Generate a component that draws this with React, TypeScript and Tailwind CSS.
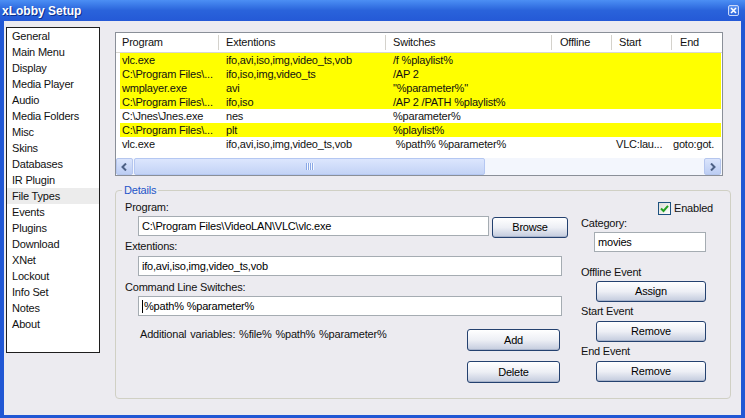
import React from 'react';

const menuItems = [
  'General', 'Main Menu', 'Display', 'Media Player', 'Audio', 'Media Folders', 'Misc', 'Skins',
  'Databases', 'IR Plugin', 'File Types', 'Events', 'Plugins', 'Download', 'XNet', 'Lockout',
  'Info Set', 'Notes', 'About',
];

interface FileType {
  program: string;
  extentions: string;
  switches: string;
  start?: string;
  end?: string;
  highlight: boolean;
}

const fileTypes: FileType[] = [
  { program: 'vlc.exe', extentions: 'ifo,avi,iso,img,video_ts,vob', switches: '/f %playlist%', highlight: true },
  { program: 'C:\\Program Files\\...', extentions: 'ifo,iso,img,video_ts', switches: '/AP 2', highlight: true },
  { program: 'wmplayer.exe', extentions: 'avi', switches: '"%parameter%"', highlight: true },
  { program: 'C:\\Program Files\\...', extentions: 'ifo,iso', switches: '/AP 2 /PATH %playlist%', highlight: true },
  { program: 'C:\\Jnes\\Jnes.exe', extentions: 'nes', switches: '%parameter%', highlight: false },
  { program: 'C:\\Program Files\\...', extentions: 'plt', switches: '%playlist%', highlight: true },
  { program: 'vlc.exe', extentions: 'ifo,avi,iso,img,video_ts,vob', switches: '\u00a0%path% %parameter%', start: 'VLC:lau...', end: 'goto:got.', highlight: false },
];

const columns = [
  { label: 'Program', w: 'w-[103px]', pl: 'pl-[6px]' },
  { label: 'Extentions', w: 'w-[167px]', pl: 'pl-[7px]' },
  { label: 'Switches', w: 'w-[166px]', pl: 'pl-[7px]' },
  { label: 'Offline', w: 'w-[60px]', pl: 'pl-[8px]' },
  { label: 'Start', w: 'w-[60px]', pl: 'pl-[7px]' },
];

const XpButton = ({ label, className }: { label: string; className: string }) => (
  <button
    className={`${className} flex items-center justify-center rounded-[3px] border border-[#24416f] bg-linear-to-b from-white via-[#edeff5] to-[#c3cbdd] text-[11px] leading-none text-black shadow-[inset_0_-1px_0_#a9b4cb]`}
  >
    {label}
  </button>
);

const TextBox = ({ value, className, caret }: { value: string; className: string; caret?: boolean }) => (
  <div className={`${className} flex h-[20px] items-center border border-[#a5acb2] bg-white pl-[3px] text-[11px] text-black whitespace-nowrap overflow-hidden`}>
    {caret && <span className="mr-[1px] inline-block h-[13px] w-px bg-black" />}
    {value}
  </div>
);

const ScrollArrow = ({ dir }: { dir: 'left' | 'right' }) => (
  <div className="flex h-[17px] w-[17px] items-center justify-center rounded-[2px] border border-[#b5c6ee] bg-linear-to-b from-[#dbe5fc] to-[#bccdf3]">
    <svg width="7" height="8" viewBox="0 0 7 8">
      {dir === 'left' ? (
        <path d="M5 0.5 L1.5 4 L5 7.5" fill="none" stroke="#4d6185" strokeWidth="2" />
      ) : (
        <path d="M2 0.5 L5.5 4 L2 7.5" fill="none" stroke="#4d6185" strokeWidth="2" />
      )}
    </svg>
  </div>
);

export default function App() {
  return (
    <div className="flex h-[418px] w-[745px] flex-col bg-[#2157d4] font-['Liberation_Sans',Arial,sans-serif] text-[11px] tracking-[-0.2px] text-[#111]">
      {/* title bar */}
      <div className="flex h-[21px] items-center bg-linear-to-b from-[#4c8ff4] via-[#2a63db] to-[#2459d6] pl-[2px] pr-[6px]">
        <span className="text-[12px] font-bold tracking-normal text-white [text-shadow:1px_1px_0_#0d2f8a]">xLobby Setup</span>
        <div className="ml-auto flex h-[11px] w-[11px] items-center justify-center rounded-[2px] border border-[#c9d8fa] bg-linear-to-b from-[#5f95f2] to-[#2f67dc]">
          <svg width="7" height="7" viewBox="0 0 7 7">
            <path d="M1 1 L6 6 M6 1 L1 6" stroke="white" strokeWidth="1.6" />
          </svg>
        </div>
      </div>

      {/* body */}
      <div className="mb-[3px] ml-[4px] mr-[4px] flex flex-1 bg-[#ecebf0]">
        {/* nav list */}
        <div className="ml-[2px] mt-[6px] h-[326px] w-[94px] border border-[#1e1e1e] bg-white">
          {menuItems.map(item => (
            <div
              key={item}
              className={`h-[16px] pl-[5px] leading-[16px] ${item === 'File Types' ? 'bg-[#ececec]' : ''}`}
            >
              {item}
            </div>
          ))}
        </div>

        <div className="ml-[15px] flex flex-col">
          {/* list view */}
          <div className="mt-[11px] flex h-[144px] w-[608px] flex-col border border-[#8a8f98] bg-white">
            <div className="flex h-[20px] border-b border-[#d9d7d0]">
              {columns.map(col => (
                <div key={col.label} className={`${col.w} flex items-center`}>
                  <span className={`${col.pl} flex-1`}>{col.label}</span>
                  <div className="h-[15px] w-px bg-[#d4d2cc]" />
                </div>
              ))}
              <div className="flex flex-1 items-center pl-[8px]">End</div>
            </div>
            {fileTypes.map((ft, i) => (
              <div
                key={i}
                className={`ml-[4px] mr-[1px] flex h-[14px] items-center whitespace-nowrap leading-[14px] ${ft.highlight ? 'bg-[#ffff00]' : ''}`}
              >
                <div className="w-[99px] pl-[2px]">{ft.program}</div>
                <div className="w-[167px] pl-[7px]">{ft.extentions}</div>
                <div className="w-[166px] pl-[7px]">{ft.switches}</div>
                <div className="w-[60px]" />
                <div className="w-[60px] pl-[4px]">{ft.start}</div>
                <div className="flex-1 overflow-hidden pl-[1px]">{ft.end}</div>
              </div>
            ))}
            <div className="flex-1" />
            <div className="flex h-[17px] bg-[#f3f6fd]">
              <ScrollArrow dir="left" />
              <div className="ml-[1px] flex w-[351px] items-center justify-center rounded-[2px] border border-[#b4c7f2] bg-linear-to-b from-[#dce6fd] to-[#c3d3f6]">
                <svg width="8" height="7" viewBox="0 0 8 7">
                  <path d="M0.5 0 V7 M2.5 0 V7 M4.5 0 V7 M6.5 0 V7" stroke="#8aa8e6" strokeWidth="1" />
                  <path d="M1.5 0 V7 M3.5 0 V7 M5.5 0 V7 M7.5 0 V7" stroke="#f4f8ff" strokeWidth="1" />
                </svg>
              </div>
              <div className="flex-1" />
              <ScrollArrow dir="right" />
              <div className="w-px" />
            </div>
          </div>

          {/* details group */}
          <div className="relative mt-[14px] flex h-[209px] w-[616px] rounded-[4px] border border-[#d0d0c4]">
            <span className="absolute -top-[8px] left-[6px] bg-[#ecebf0] px-[2px] leading-[14px] text-[#1f55c8]">Details</span>

            <div className="flex w-[452px] flex-col pl-[9px] pt-[9px]">
              <div className="h-[14px] leading-[14px]">Program:</div>
              <div className="mt-[2px] flex items-start">
                <TextBox value={'C:\\Program Files\\VideoLAN\\VLC\\vlc.exe'} className="ml-[13px] w-[351px]" />
                <XpButton label="Browse" className="ml-[3px] mt-[1px] h-[21px] w-[76px]" />
              </div>
              <div className="mt-[1px] h-[14px] leading-[14px]">Extentions:</div>
              <TextBox value="ifo,avi,iso,img,video_ts,vob" className="ml-[13px] mt-[3px] w-[424px]" />
              <div className="mt-[4px] h-[14px] leading-[14px]">Command Line Switches:</div>
              <TextBox value="%path% %parameter%" caret className="ml-[13px] mt-[2px] w-[424px]" />
              <div className="mt-[11px] flex items-start">
                <div className="ml-[15px] h-[14px] leading-[14px] [word-spacing:1px]">
                  Additional variables: %file% %path% %parameter%
                </div>
                <div className="ml-auto mr-[8px] flex flex-col pt-[2px]">
                  <XpButton label="Add" className="h-[22px] w-[93px]" />
                  <XpButton label="Delete" className="mt-[10px] h-[22px] w-[93px]" />
                </div>
              </div>
            </div>

            <div className="ml-[13px] flex flex-col pt-[10px]">
              <div className="flex h-[14px] items-center pl-[77px]">
                <div className="flex h-[13px] w-[13px] items-center justify-center border border-[#1c5180] bg-linear-to-br from-[#dcdcd7] to-white">
                  <svg width="9" height="9" viewBox="0 0 9 9">
                    <path d="M1 4.5 L3.5 7 L8 1.8" fill="none" stroke="#21a121" strokeWidth="2" />
                  </svg>
                </div>
                <span className="ml-[3px]">Enabled</span>
              </div>
              <div className="mt-[1px] h-[14px] leading-[14px]">Category:</div>
              <TextBox value="movies" className="ml-[13px] mt-[2px] w-[112px]" />
              <div className="mt-[13px] h-[14px] leading-[14px]">Offline Event</div>
              <XpButton label="Assign" className="ml-[15px] mt-[2px] h-[21px] w-[110px]" />
              <div className="mt-[2px] h-[14px] leading-[14px]">Start Event</div>
              <XpButton label="Remove" className="ml-[15px] mt-[3px] h-[21px] w-[110px]" />
              <div className="mt-[2px] h-[14px] leading-[14px]">End Event</div>
              <XpButton label="Remove" className="ml-[15px] mt-[3px] h-[21px] w-[110px]" />
            </div>
          </div>
        </div>
      </div>
    </div>
  );
}
